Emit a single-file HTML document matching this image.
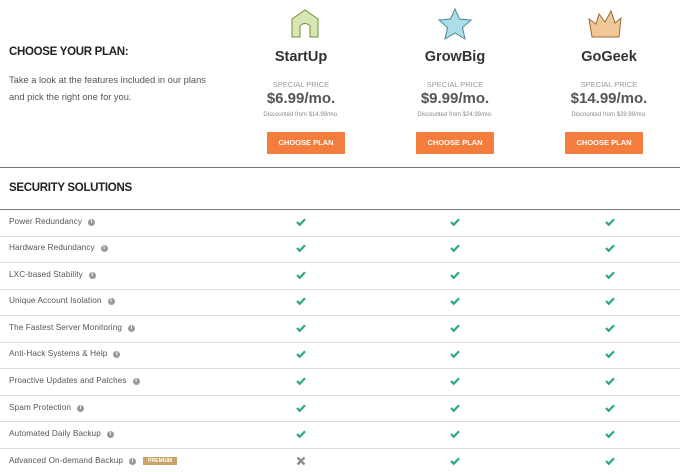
<!DOCTYPE html>
<html><head><style>
body{margin:0;width:680px;height:474px;background:#fff;font-family:"Liberation Sans",sans-serif;position:relative;overflow:hidden;color:#333}
.a{position:absolute}
h1{position:absolute;margin:0;font-size:11.5px;font-weight:bold;color:#222;left:9px;letter-spacing:-0.3px}
.intro{left:9px;top:72px;font-size:9.3px;line-height:17px;color:#555}
.col{position:absolute;width:150px;text-align:center}
.name{font-size:14.5px;font-weight:bold;color:#333;top:49px}
.sp{font-size:7.5px;color:#999;top:80px}
.pr{font-size:15px;font-weight:bold;color:#555;top:90px}
.dc{font-size:6px;color:#888;top:112px}
.btn{position:absolute;width:78px;height:22px;background:#f47c3c;color:#fff;font-size:7.5px;font-weight:bold;line-height:22px;text-align:center;border-radius:1px;top:132px}
.line{position:absolute;left:0;width:680px;height:1px;background:#ddd}
.row{position:absolute;left:9px;font-size:8.2px;color:#555;letter-spacing:0.1px}
.i{display:inline-block;width:7px;height:7px;border-radius:50%;background:#999;color:#fff;font-size:6px;line-height:7px;text-align:center;margin-left:6px;vertical-align:1px;font-weight:bold}
</style></head><body>
<h1 style="top:46px">CHOOSE YOUR PLAN:</h1>
<div class="a intro">Take a look at the features included in our plans<br>and pick the right one for you.</div>

<svg class="a" style="left:290px;top:9px" width="32" height="30"><path d="M2 10 L15 1 L28 10 L28 28 L20 28 L20 17 Q15 12 10 17 L10 28 L2 28 Z" fill="#d6e6b4" stroke="#6f9138" stroke-width="1"/></svg>
<svg class="a" style="left:436px;top:8px" width="38" height="33"><path d="M19 1 L23.5 11 L35 12 L26.5 19.5 L29 31 L19 25 L9 31 L11.5 19.5 L3 12 L14.5 11 Z" fill="#acdde8" stroke="#4a8a99" stroke-width="1"/></svg>
<svg class="a" style="left:587px;top:10px" width="36" height="29"><path d="M2 9 L9 14 L12 4 L18 12 L24 1 L28 13 L34 8 L32 27 L5 27 Z" fill="#f0c796" stroke="#9c6a33" stroke-width="1"/></svg>

<div class="col name" style="left:226px">StartUp</div>
<div class="col name" style="left:380px">GrowBig</div>
<div class="col name" style="left:534px">GoGeek</div>
<div class="col sp" style="left:226px">SPECIAL PRICE</div>
<div class="col sp" style="left:380px">SPECIAL PRICE</div>
<div class="col sp" style="left:534px">SPECIAL PRICE</div>
<div class="col pr" style="left:226px">$6.99/mo.</div>
<div class="col pr" style="left:380px">$9.99/mo.</div>
<div class="col pr" style="left:534px">$14.99/mo.</div>
<div class="col dc" style="left:226px">Discounted from $14.99/mo.</div>
<div class="col dc" style="left:380px">Discounted from $24.99/mo.</div>
<div class="col dc" style="left:534px">Discounted from $39.99/mo.</div>
<div class="btn" style="left:267px">CHOOSE PLAN</div>
<div class="btn" style="left:416px">CHOOSE PLAN</div>
<div class="btn" style="left:565px">CHOOSE PLAN</div>

<div class="line" style="top:167px;background:#777"></div>
<h1 style="top:182px">SECURITY SOLUTIONS</h1>
<div class="line" style="top:209px;background:#777"></div>

<div class="row" style="top:217px">Power Redundancy<span class="i">i</span></div>
<div class="row" style="top:243px">Hardware Redundancy<span class="i">i</span></div>
<div class="row" style="top:270px">LXC-based Stability<span class="i">i</span></div>
<div class="row" style="top:296px">Unique Account Isolation<span class="i">i</span></div>
<div class="row" style="top:323px">The Fastest Server Monitoring<span class="i">i</span></div>
<div class="row" style="top:349px">Anti-Hack Systems &amp; Help<span class="i">i</span></div>
<div class="row" style="top:376px">Proactive Updates and Patches<span class="i">i</span></div>
<div class="row" style="top:403px">Spam Protection<span class="i">i</span></div>
<div class="row" style="top:429px">Automated Daily Backup<span class="i">i</span></div>
<div class="row" style="top:456px">Advanced On-demand Backup<span class="i">i</span><span style="display:inline-block;margin-left:7px;background:#c9a46a;color:#fff;font-size:5px;font-weight:bold;padding:1px 5px;vertical-align:1px">PREMIUM</span></div>

<div class="line" style="top:236px"></div>
<div class="line" style="top:262px"></div>
<div class="line" style="top:289px"></div>
<div class="line" style="top:315px"></div>
<div class="line" style="top:342px"></div>
<div class="line" style="top:368px"></div>
<div class="line" style="top:395px"></div>
<div class="line" style="top:421px"></div>
<div class="line" style="top:448px"></div>

<svg class="a" style="left:0;top:0" width="680" height="474">
<defs><path id="c" d="M-4 0 L-1.3 2.8 L4 -2.8" fill="none" stroke="#2fa87a" stroke-width="2.2"/></defs>
<g>
<use href="#c" x="301" y="222"/><use href="#c" x="455" y="222"/><use href="#c" x="610" y="222"/>
<use href="#c" x="301" y="248"/><use href="#c" x="455" y="248"/><use href="#c" x="610" y="248"/>
<use href="#c" x="301" y="275"/><use href="#c" x="455" y="275"/><use href="#c" x="610" y="275"/>
<use href="#c" x="301" y="301"/><use href="#c" x="455" y="301"/><use href="#c" x="610" y="301"/>
<use href="#c" x="301" y="328"/><use href="#c" x="455" y="328"/><use href="#c" x="610" y="328"/>
<use href="#c" x="301" y="354"/><use href="#c" x="455" y="354"/><use href="#c" x="610" y="354"/>
<use href="#c" x="301" y="381"/><use href="#c" x="455" y="381"/><use href="#c" x="610" y="381"/>
<use href="#c" x="301" y="408"/><use href="#c" x="455" y="408"/><use href="#c" x="610" y="408"/>
<use href="#c" x="301" y="434"/><use href="#c" x="455" y="434"/><use href="#c" x="610" y="434"/>
<use href="#c" x="455" y="461"/><use href="#c" x="610" y="461"/>
</g>
<path d="M297.5 457.5 L304.5 464.5 M304.5 457.5 L297.5 464.5" stroke="#888" stroke-width="2.2"/>
</svg>
</body></html>
